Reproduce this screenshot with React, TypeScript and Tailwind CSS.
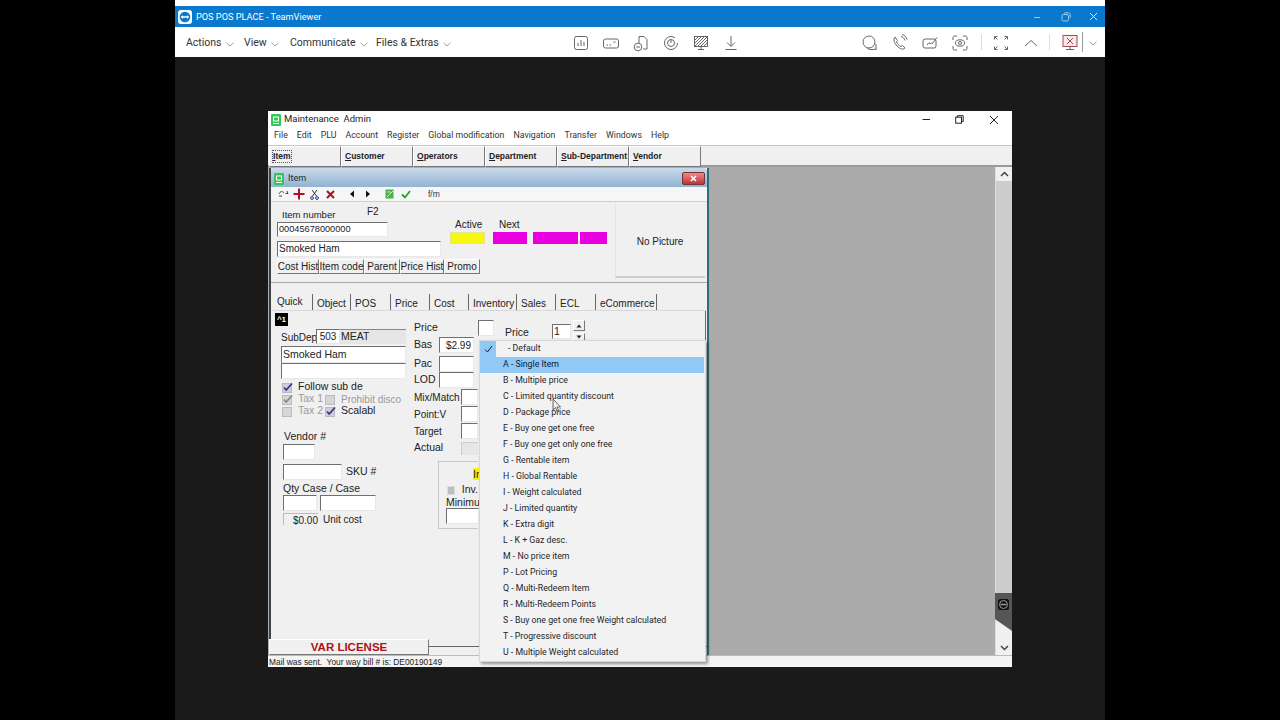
import React from "react";

const sunken = "border border-t-[#6f6f6f] border-l-[#6f6f6f] border-r-[#e8e8e8] border-b-[#e8e8e8] bg-white";
const raised = "border border-t-white border-l-white border-r-[#777] border-b-[#777] bg-[#f0f0f0]";

const S = ({ children }: { children: React.ReactNode }) => (
  <svg width="18" height="18" viewBox="0 0 18 18" fill="none" stroke="#666" strokeWidth="1" className="shrink-0">
    {children}
  </svg>
);

const Chev = () => (
  <svg width="8" height="5" viewBox="0 0 8 5" fill="none" stroke="#888" strokeWidth="0.8" className="mt-[2px]">
    <path d="M0.5 0.8 L4 4 L7.5 0.8" />
  </svg>
);

const TopMenu = ({ label, w }: { label: string; w: string }) => (
  <div className={`flex items-center gap-[4px] mt-[2px] ${w}`}>
    <span className="text-[10.5px] text-[#333]">{label}</span>
    <Chev />
  </div>
);

const U = ({ c, r }: { c: string; r: string }) => (
  <>
    <span className="underline">{c}</span>
    {r}
  </>
);

const MainTab = ({ c, r, boxed }: { c: string; r: string; boxed?: boolean }) => (
  <div className={`w-[72px] h-[21px] ${raised} flex items-center ${boxed ? "pl-[2px]" : "pl-[3px]"} text-[8.5px] font-bold text-[#222] whitespace-nowrap`}>
    <span className={boxed ? "border border-dotted border-[#555] leading-[11px]" : "leading-[11px]"}>
      <U c={c} r={r} />
    </span>
  </div>
);

const Btn = ({ label, w }: { label: string; w: string }) => (
  <div className={`${w} h-[15px] ${raised} flex items-center justify-center text-[10px] text-[#222] whitespace-nowrap`}>
    {label}
  </div>
);

const Tab = ({ label, w, first }: { label: string; w: string; first?: boolean }) => (
  <div className={`${w} h-[16px] flex items-center pl-[4px] text-[10px] text-[#222] border-r border-r-[#666] ${first ? "-mt-[2px]" : ""}`}>
    <span className={first ? "-mt-[1px]" : "mt-[2px]"}>{label}</span>
  </div>
);

const Check = ({ on, dim }: { on?: boolean; dim?: boolean }) => (
  <svg width="11" height="11" viewBox="0 0 11 11" className="shrink-0">
    <rect x="0.5" y="1.5" width="9" height="9" fill={dim ? "#d6d6d6" : "#cfcfd6"} stroke="#bbb" />
    {on && <path d="M2 5.5 L4.2 8 L10 1.5" fill="none" stroke={dim ? "#888" : "#3a2f8f"} strokeWidth="1.7" />}
  </svg>
);

const menuItems = [
  "B - Multiple price",
  "C - Limited quantity discount",
  "D - Package price",
  "E - Buy one get one free",
  "F - Buy one get only one free",
  "G - Rentable item",
  "H - Global Rentable",
  "I - Weight calculated",
  "J - Limited quantity",
  "K - Extra digit",
  "L - K + Gaz desc.",
  "M - No price item",
  "P - Lot Pricing",
  "Q - Multi-Redeem Item",
  "R - Multi-Redeem Points",
  "S - Buy one get one free Weight calculated",
  "T - Progressive discount",
  "U - Multiple Weight calculated",
];

export default function App() {
  return (
    <div className="w-[1280px] h-[720px] bg-black flex justify-center overflow-hidden [font-family:'Liberation_Sans',sans-serif]">
      <div className="w-[930px] h-[720px] bg-[#1a1a1a] flex flex-col">
        <div className="h-[6px] bg-white" />
        {/* TeamViewer title */}
        <div className="h-[21px] bg-[#0a78cc] flex items-center pl-[3px] [font-family:Roboto,sans-serif]">
          <svg width="14" height="14" viewBox="0 0 14 14" className="shrink-0">
            <rect x="0" y="0" width="14" height="14" rx="3" fill="#fff" />
            <circle cx="7" cy="7" r="5.3" fill="#0a78cc" />
            <path d="M2.6 7 L5 5.2 V6.3 H9 V5.2 L11.4 7 L9 8.8 V7.7 H5 V8.8 Z" fill="#fff" />
          </svg>
          <span className="ml-[4px] text-[9.2px] text-white">POS POS PLACE - TeamViewer</span>
          <div className="ml-auto flex items-center">
            <svg width="8" height="8" viewBox="0 0 8 8" className="mr-[20px]" stroke="#9ccbee" fill="none"><path d="M1 4.5 H7" /></svg>
            <svg width="10" height="10" viewBox="0 0 10 10" className="mr-[18px]" stroke="#9ccbee" fill="none"><rect x="1" y="2.5" width="6.5" height="6.5" rx="1.5" /><path d="M3 2 C3 1 4 0.8 5 0.8 H7.5 C8.5 0.8 9.2 1.5 9.2 2.5 V6" /></svg>
            <svg width="9" height="9" viewBox="0 0 9 9" className="mr-[7px]" stroke="#d5e8f7" fill="none"><path d="M1 1 L8 8 M8 1 L1 8" /></svg>
          </div>
        </div>
        {/* TeamViewer toolbar */}
        <div className="h-[30px] bg-white flex items-center pl-[11px] [font-family:Roboto,sans-serif]">
          <TopMenu label="Actions" w="w-[58px]" />
          <TopMenu label="View" w="w-[46px]" />
          <TopMenu label="Communicate" w="w-[86px]" />
          <TopMenu label="Files & Extras" w="w-[203px]" />
          <div className="flex items-center gap-[12px] ml-[-7px] mt-[1px]">
            <S><rect x="2.5" y="2.5" width="13" height="13" rx="2" /><path d="M6 12 V9 M9 12 V6 M12 12 V8" /></S>
            <S><rect x="1.5" y="5" width="15" height="9" rx="2" /><path d="M4.5 11 H6 M7.5 11 H9 M11.5 8 H13.5" /></S>
            <S><path d="M7 9 V2.5 H12 L15 5.5 V15 H11" /><circle cx="6" cy="13" r="3.8" /><path d="M4 13 H8" /></S>
            <S><circle cx="9" cy="9" r="6.5" strokeDasharray="34 7" /><circle cx="9" cy="9" r="3.5" /><path d="M9 6 V9" /></S>
            <S><rect x="2.5" y="2.5" width="13" height="10" /><path d="M3 6 L6 3 M3 9 L9 3 M3 12 L12 3 M6 12 L15 3 M9 12 L15 6 M12 12 L15 9" /><path d="M9 12.5 V15 M6 15.5 H12" /></S>
            <S><path d="M9 2 V12 M5 8.5 L9 12.5 L13 8.5 M3.5 15.5 H14.5" /></S>
          </div>
          <div className="flex items-center gap-[12px] ml-[121px] mt-[1px]">
            <S><circle cx="8" cy="8" r="6" /><path d="M6 14 C8 16 12 16 14 15 L15 16 V10" /></S>
            <S><path d="M4 3 C2 5 3 9 6 12 C9 15 12 16 14 14 L11.5 11.5 L10 12.5 C8.5 12 6 9.5 5.5 8 L6.5 6.5 Z" /><path d="M10 2.5 C12 3 13.5 4.5 14 6.5 M11 0.5 C13.5 1 15.5 3 16 5.5" /></S>
            <S><rect x="2" y="5" width="13" height="9" rx="2" /><path d="M6 11 C8 8 9 8 9 10 C10 9 11 9 11 10 L16 3.5" /></S>
            <S><path d="M2 6 V3.5 C2 2.7 2.7 2 3.5 2 H6 M12 2 H14.5 C15.3 2 16 2.7 16 3.5 V6 M16 12 V14.5 C16 15.3 15.3 16 14.5 16 H12 M6 16 H3.5 C2.7 16 2 15.3 2 14.5 V12" /><ellipse cx="9" cy="9" rx="4.5" ry="3.2" /><circle cx="9" cy="9" r="1.5" /></S>
          </div>
          <div className="w-px h-[16px] bg-[#ddd] ml-[12px]" />
          <div className="ml-[10px] mt-[1px] flex items-center">
            <S><path d="M2.5 5.5 V2.5 H5.5 M5.5 5.5 L3 3 M15.5 5.5 V2.5 H12.5 M12.5 5.5 L15 3 M2.5 12.5 V15.5 H5.5 M5.5 12.5 L3 15 M15.5 12.5 V15.5 H12.5 M12.5 12.5 L15 15" /></S>
          </div>
          <div className="ml-[12px] mt-[1px]">
            <S><path d="M3 12 L9 6.5 L15 12" /></S>
          </div>
          <div className="w-px h-[16px] bg-[#ddd] ml-[9px]" />
          <div className="ml-[11px] mt-[1px]">
            <svg width="18" height="18" viewBox="0 0 18 18" fill="#f8e8ea" stroke="#a24a55" strokeWidth="1">
              <rect x="2" y="1.5" width="14" height="11" />
              <path d="M6 4 L12 10 M12 4 L6 10 M9 12.5 V15 M5 15.5 H13" />
            </svg>
          </div>
          <div className="w-px h-[20px] bg-[#999] ml-[3px]" />
          <div className="ml-[6px]"><Chev /></div>
        </div>

        {/* Remote desktop */}
        <div className="flex-1 pl-[93px] pt-[54px] bg-[#1a1a1a]">
          <div className="relative w-[744px] h-[556px] bg-white flex flex-col text-[#222] overflow-visible">
            <div className="h-[16px] flex items-center pl-[3px] shrink-0 pt-[1px]">
              <svg width="10" height="12" viewBox="0 0 10 12"><rect width="10" height="12" rx="1" fill="#35c45a" /><rect x="2.5" y="3" width="5" height="4" fill="none" stroke="#fff" /><path d="M2 9.5 H8" stroke="#fff" /></svg>
              <span className="ml-[3px] text-[9.5px] [font-family:Roboto,sans-serif]">Maintenance&nbsp; Admin</span>
              <div className="ml-auto flex items-center">
                <svg width="9" height="9" viewBox="0 0 9 9" className="mr-[24px]" stroke="#222" fill="none"><path d="M0.5 4.5 H8" /></svg>
                <svg width="9" height="9" viewBox="0 0 9 9" className="mr-[25px]" stroke="#222" fill="none"><rect x="0.7" y="2.2" width="5.8" height="6" /><path d="M2.3 2 V0.7 H8.2 V6.5 H6.7" /></svg>
                <svg width="10" height="10" viewBox="0 0 10 10" className="mr-[13px]" stroke="#222" fill="none"><path d="M1 1 L9 9 M9 1 L1 9" /></svg>
              </div>
            </div>
            <div className="h-[16px] flex items-center pl-[6px] pt-[1px] gap-[9px] text-[8.8px] shrink-0 [font-family:Roboto,sans-serif] text-[#333]">
              {["File", "Edit", "PLU", "Account", "Register", "Global modification", "Navigation", "Transfer", "Windows", "Help"].map((m) => (
                <span key={m}>{m}</span>
              ))}
            </div>
            <div className="h-[22px] mt-[2px] shrink-0 flex pl-[1px] bg-[#f0f0f0] border-t border-t-[#c4c4c4] border-b-2 border-b-[#9a9a9a]">
              <MainTab c="I" r="tem" boxed />
              <MainTab c="C" r="ustomer" />
              <MainTab c="O" r="perators" />
              <MainTab c="D" r="epartment" />
              <MainTab c="S" r="ub-Department" />
              <MainTab c="V" r="endor" />
            </div>
            {/* MDI */}
            <div className="flex-1 flex min-h-0 bg-[#ababab]">
              <div className="flex-1 min-w-0">
                <div className="w-[440px] h-[487px] mt-[1px] ml-[1px] bg-[#f0f0f0] border-l-2 border-l-[#39434a] border-r-2 border-r-[#2c6f76] flex flex-col">
                  <div className="h-[19px] shrink-0 bg-gradient-to-b from-[#c8d9ea] to-[#93b3d2] flex items-center pl-[3px] pt-[2px] rounded-t-[3px]">
                    <svg width="10" height="12" viewBox="0 0 10 12"><rect width="10" height="12" rx="1" fill="#35c45a" /><rect x="2.5" y="3" width="5" height="4" fill="none" stroke="#fff" /><path d="M2 9.5 H8" stroke="#fff" /></svg>
                    <span className="ml-[4px] text-[9px] text-[#1a2a3a] [font-family:Roboto,sans-serif]">Item</span>
                    <div className="ml-auto mr-[2px] w-[23px] h-[13px] rounded-[2px] bg-gradient-to-b from-[#e88] to-[#b33] border border-[#733] flex items-center justify-center">
                      <svg width="7" height="7" viewBox="0 0 7 7" stroke="#fff" strokeWidth="1.6"><path d="M1 1 L6 6 M6 1 L1 6" /></svg>
                    </div>
                  </div>
                  <div className="h-[15px] shrink-0 bg-[#f6f6f6] flex items-center pl-[7px] border-b border-b-[#cfcfcf]">
                    <svg width="11" height="8" viewBox="0 0 11 8" fill="none" stroke="#444"><path d="M1 4 C2 1 5 1 6 3 M9 1 L10 3.5 L7.5 3.5 M1 6 H4" /></svg>
                    <svg width="12" height="12" viewBox="0 0 12 12" className="ml-[4px]"><path d="M6 0.5 V11.5 M0.5 6 H11.5" stroke="#b01020" strokeWidth="2" /></svg>
                    <svg width="9" height="11" viewBox="0 0 9 11" className="ml-[5px]" fill="none" stroke="#333"><path d="M2 1 L6.5 7 M7 1 L2.5 7" /><circle cx="2" cy="9" r="1.4" stroke="#223a88" /><circle cx="7" cy="9" r="1.4" stroke="#223a88" /></svg>
                    <svg width="9" height="9" viewBox="0 0 9 9" className="ml-[7px]" stroke="#a81020" strokeWidth="2"><path d="M1 1 L8 8 M8 1 L1 8" /></svg>
                    <svg width="6" height="8" viewBox="0 0 6 8" className="ml-[14px]"><path d="M5 0.5 V7.5 L1 4 Z" fill="#111" /></svg>
                    <svg width="6" height="8" viewBox="0 0 6 8" className="ml-[10px]"><path d="M1 0.5 V7.5 L5 4 Z" fill="#111" /></svg>
                    <svg width="10" height="11" viewBox="0 0 10 11" className="ml-[14px]"><rect x="0.5" y="0.5" width="8" height="9" fill="#4cae4f" /><path d="M2 8 L8 2 M2 3 L6 3" stroke="#cde8b5" /></svg>
                    <svg width="10" height="9" viewBox="0 0 10 9" className="ml-[6px]" fill="none" stroke="#22a030" strokeWidth="1.8"><path d="M1 4.5 L4 7.5 L9 1" /></svg>
                    <span className="ml-[17px] text-[8.5px] text-[#333]">f/m</span>
                  </div>
                  {/* Header area */}
                  <div className="h-[81px] shrink-0 flex border-b border-b-[#a8a8a8]">
                    <div className="w-[344px] pl-[6px] shrink-0">
                      <div className="flex h-[20px] items-end pb-[2px]">
                        <span className="ml-[5px] w-[85px] text-[9.5px] leading-[11px]">Item number</span>
                        <span className="text-[10px] leading-[11px] mb-[3px]">F2</span>
                      </div>
                      <div className="flex">
                        <div>
                          <div className={`w-[111px] h-[15px] ${sunken} text-[9.2px] leading-[13px] pl-[1px]`}>00045678000000</div>
                          <div className={`w-[164px] h-[16px] mt-[4px] ${sunken} text-[10px] leading-[14px] pl-[1px]`}>Smoked Ham</div>
                        </div>
                        <div className="ml-[9px] -mt-[3px]">
                          <div className="flex text-[10px] leading-[12px]">
                            <span className="ml-[5px] w-[44px]">Active</span>
                            <span>Next</span>
                          </div>
                          <div className="flex mt-[1px]">
                            <div className="w-[35px] h-[12px] bg-[#f7f711] border border-[#e4e48a]" />
                            <div className="w-[34px] h-[12px] bg-[#e800e0] ml-[8px]" />
                            <div className="w-[45px] h-[12px] bg-[#e800e0] ml-[6px]" />
                            <div className="w-[27px] h-[12px] bg-[#e800e0] ml-[2px]" />
                          </div>
                        </div>
                      </div>
                      <div className="flex mt-[2px]">
                        <Btn label="Cost Hist" w="w-[42px]" />
                        <Btn label="Item code" w="w-[45px]" />
                        <Btn label="Parent" w="w-[36px]" />
                        <Btn label="Price Hist" w="w-[44px]" />
                        <Btn label="Promo" w="w-[36px]" />
                      </div>
                    </div>
                    <div className="flex-1 mr-[2px] h-[76px] border-b-2 border-b-[#cfcfcf] border-l border-l-[#e4e4e4] flex items-center justify-center text-[10px]">
                      <span className="mt-[4px] ml-[-1px]">No Picture</span>
                    </div>
                  </div>
                  {/* Tabs */}
                  <div className="h-[28px] shrink-0 flex items-end pl-[2px] border-b border-b-[#d8d8d8]">
                    <Tab label="Quick" w="w-[40px]" first />
                    <Tab label="Object" w="w-[38px]" />
                    <Tab label="POS" w="w-[40px]" />
                    <Tab label="Price" w="w-[39px]" />
                    <Tab label="Cost" w="w-[39px]" />
                    <Tab label="Inventory" w="w-[48px]" />
                    <Tab label="Sales" w="w-[39px]" />
                    <Tab label="ECL" w="w-[40px]" />
                    <Tab label="eCommerce" w="w-[61px]" />
                  </div>
                  {/* Form */}
                  <div className="flex-1 min-h-0 flex flex-col">
                    <div className="flex h-[328px] shrink-0">
                      <div className="w-[143px] shrink-0 pl-[4px] text-[10.5px]">
                        <div className="w-[13px] h-[13px] mt-[2px] bg-black text-white text-[8px] font-bold leading-[13px] text-center">^1</div>
                        <div className="flex items-end ml-[6px] mt-[3px] h-[15px]">
                          <span className="w-[35px] leading-[13px] whitespace-nowrap text-[10px]">SubDep</span>
                          <div className={`w-[24px] h-[15px] ${sunken} text-center leading-[13px] text-[10px]`}>503</div>
                          <div className="w-[66px] h-[15px] bg-[#e6e6e6] pl-[1px] leading-[13px] border-t border-t-[#888]">MEAT</div>
                        </div>
                        <div className={`ml-[6px] mt-[2px] w-[125px] h-[17px] ${sunken} leading-[15px] pl-[1px]`}>Smoked Ham</div>
                        <div className={`ml-[6px] w-[125px] h-[16px] ${sunken}`} />
                        <div className="flex items-center ml-[7px] mt-[2px] h-[12px] gap-[5px]">
                          <Check on />
                          <span className="whitespace-nowrap">Follow sub de</span>
                        </div>
                        <div className="flex items-center ml-[7px] h-[12px] text-[#9a9a9a]">
                          <Check on dim />
                          <span className="ml-[5px] w-[27px]">Tax 1</span>
                          <Check dim />
                          <span className="ml-[5px] whitespace-nowrap text-[10px]">Prohibit disco</span>
                        </div>
                        <div className="flex items-center ml-[7px] h-[12px]">
                          <Check dim />
                          <span className="ml-[5px] w-[27px] text-[#9a9a9a]">Tax 2</span>
                          <Check on />
                          <span className="ml-[5px] whitespace-nowrap">Scalabl</span>
                        </div>
                        <div className="ml-[9px] mt-[13px] leading-[12px]">Vendor #</div>
                        <div className={`ml-[8px] mt-[2px] w-[32px] h-[16px] ${sunken}`} />
                        <div className="flex items-center ml-[8px] mt-[4px]">
                          <div className={`w-[59px] h-[16px] ${sunken}`} />
                          <span className="ml-[4px]">SKU #</span>
                        </div>
                        <div className="ml-[8px] mt-[2px] leading-[12px]">Qty Case / Case</div>
                        <div className="flex ml-[8px] mt-[1px] gap-[3px]">
                          <div className={`w-[34px] h-[16px] ${sunken}`} />
                          <div className={`w-[56px] h-[16px] ${sunken}`} />
                        </div>
                        <div className="flex items-center ml-[8px] mt-[1px] h-[14px]">
                          <div className="w-[35px] h-[12px] border-t border-l border-t-[#bbb] border-l-[#bbb] text-right leading-[13px] text-[10px]">$0.00</div>
                          <span className="ml-[5px] text-[10px]">Unit cost</span>
                        </div>
                      </div>
                      <div className="w-[64px] shrink-0 text-[10.5px]">
                        <div className="h-[24px] pt-[10px] leading-[12px]">Price</div>
                        <div className="flex items-center h-[16px] mt-[2px]">
                          <span className="w-[25px]">Bas</span>
                          <div className={`w-[35px] h-[16px] ${sunken} text-right pr-[2px] leading-[15px] text-[10px]`}>$2.99</div>
                        </div>
                        <div className="flex items-center h-[16px] mt-[3px]">
                          <span className="w-[25px]">Pac</span>
                          <div className={`w-[35px] h-[16px] ${sunken}`} />
                        </div>
                        <div className="flex items-center h-[16px]">
                          <span className="w-[25px]">LOD</span>
                          <div className={`w-[35px] h-[16px] ${sunken}`} />
                        </div>
                        {["Mix/Match a", "Point:V", "Target"].map((l) => (
                          <div key={l} className="flex items-center h-[16px] mt-[1px]">
                            <span className="w-[47px] whitespace-nowrap text-[10px]">{l}</span>
                            <div className={`w-[17px] h-[16px] ${sunken}`} />
                          </div>
                        ))}
                        <div className="flex items-center h-[14px] mt-[2px]">
                          <span className="w-[47px]">Actual</span>
                          <div className="w-[17px] h-[13px] bg-[#e6e6e6] border-t border-l border-[#ccc]" />
                        </div>
                        <div className="ml-[24px] mt-[6px] h-[68px] border border-[#c8c8c8] border-r-0 pl-[8px]">
                          <div className="ml-[26px] mt-[6px] h-[12px] w-[6px] bg-[#f6f600] leading-[12px]">In</div>
                          <div className="flex items-center gap-[7px] mt-[4px] h-[12px]">
                            <div className="w-[9px] h-[9px] bg-[#bdbdbd] border border-[#ddd]" />
                            <span>Inv.</span>
                          </div>
                          <div className="-ml-[1px] leading-[12px] whitespace-nowrap">Minimum</div>
                          <div className={`-ml-[1px] w-[33px] h-[16px] ${sunken}`} />
                        </div>
                      </div>
                      <div className="flex-1 text-[10.5px] relative">
                        <div className={`w-[16px] h-[16px] mt-[9px] ${sunken}`} />
                        <div className="flex -mt-[12px] pl-[27px]">
                          <span className="w-[47px] mt-[1px]">Price</span>
                          <div className={`w-[19px] h-[15px] ${sunken} pl-[1px] leading-[13px]`}>1</div>
                          <div className="ml-[2px] -mt-[4px]">
                            <div className={`w-[12px] h-[11px] ${raised} flex items-center justify-center`}>
                              <svg width="6" height="4" viewBox="0 0 6 4"><path d="M3 0.5 L5.5 3.5 H0.5 Z" fill="#222" /></svg>
                            </div>
                            <div className={`w-[12px] h-[8px] mt-[2px] ${raised} flex items-center justify-center`}>
                              <svg width="6" height="4" viewBox="0 0 6 4"><path d="M3 3.5 L5.5 0.5 H0.5 Z" fill="#222" /></svg>
                            </div>
                          </div>
                        </div>
                        <div className="absolute right-[1px] top-[0px] h-[30px] w-px bg-[#666]" />
                      </div>
                    </div>
                    <div className="flex items-start">
                      <div className={`w-[160px] h-[16px] -ml-[2px] ${raised} text-center text-[11.5px] font-bold text-[#b01018] leading-[14px]`}>VAR LICENSE</div>
                      <div className="flex-1 h-[8px] border-b border-b-[#666]" />
                    </div>
                  </div>
                </div>
              </div>
              {/* Scrollbar */}
              <div className="w-[17px] shrink-0 bg-[#f0f0f0] flex flex-col items-center border-l border-l-[#ddd]">
                <div className="h-[14px] flex items-center justify-center">
                  <svg width="9" height="6" viewBox="0 0 9 6" fill="none" stroke="#444" strokeWidth="1.5"><path d="M1 5 L4.5 1.5 L8 5" /></svg>
                </div>
                <div className="w-full h-[440px] bg-[#cdcdcd]" />
                <div className="mt-auto h-[14px] flex items-center justify-center">
                  <svg width="9" height="6" viewBox="0 0 9 6" fill="none" stroke="#444" strokeWidth="1.5"><path d="M1 1 L4.5 4.5 L8 1" /></svg>
                </div>
              </div>
            </div>
            {/* Status */}
            <div className="h-[12px] shrink-0 bg-[#f4f4f4] border-t border-t-[#bbb] pl-[1px] text-[8.4px] leading-[12px] text-[#222] whitespace-pre">
              Mail was sent.  Your way bill # is: DE00190149
            </div>

            {/* Dropdown */}
            <div className="absolute left-[211px] top-[229px] w-[227px] h-[322px] bg-[#f2f2f2] border border-[#d8d8d8] shadow-[2px_2px_3px_rgba(0,0,0,0.4)] pr-[1px] text-[8.75px] text-[#1f1f2a] [font-family:Roboto,sans-serif]">
              <div className="h-[16px] flex items-center">
                <div className="w-[16px] h-[16px] bg-[#90c8f6] flex items-center justify-center">
                  <svg width="9" height="8" viewBox="0 0 9 8" fill="none" stroke="#123" strokeWidth="1"><path d="M1 4.5 L3.5 7 L8 1" /></svg>
                </div>
                <span className="ml-[12px]">- Default</span>
              </div>
              <div className="h-[16px] bg-[#90c8f6] flex items-center pl-[23px] text-[#0a1a3a]">A - Single Item</div>
              {menuItems.map((m) => (
                <div key={m} className="h-[16px] flex items-center pl-[23px] whitespace-nowrap">{m}</div>
              ))}
              <svg width="10" height="15" viewBox="0 0 10 15" className="absolute left-[72px] top-[57px]">
                <path d="M1 1 V12 L3.5 9.5 L5.5 14 L7 13.3 L5 9 H8.5 Z" fill="#ededed" fillOpacity="0.6" stroke="#444" strokeWidth="0.8" />
              </svg>
            </div>

            {/* TV side handle */}
            <div className="absolute left-[726px] top-[482px]">
              <svg width="18" height="38" viewBox="0 0 18 38">
                <path d="M1 0 H18 V38 L1 26 Z" fill="#565656" />
                <rect x="4" y="6" width="11" height="11" rx="2.5" fill="#111" />
                <circle cx="9.5" cy="11.5" r="4" fill="none" stroke="#999" />
                <path d="M6.5 11.5 H12.5" stroke="#999" strokeWidth="1.5" />
              </svg>
            </div>
          </div>
        </div>
      </div>
    </div>
  );
}
